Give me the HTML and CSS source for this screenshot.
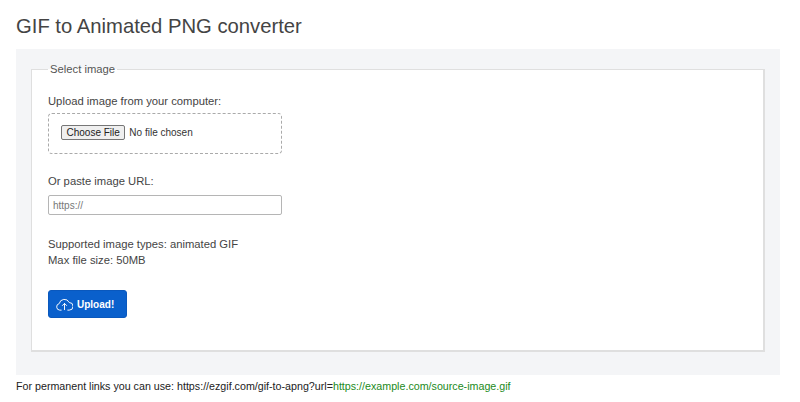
FILE: index.html
```html
<!DOCTYPE html>
<html lang="en">
<head>
    <meta charset="UTF-8">
    <meta name="viewport" content="width=device-width, initial-scale=1.0">
    <title>GIF to Animated PNG converter</title>
    <link rel="stylesheet" href="styles.css">
</head>
<body>
    <h1>GIF to Animated PNG converter</h1>
    <form class="panel">
        <fieldset>
            <legend>Select image</legend>
            <label for="file">Upload image from your computer:</label>
            <div class="drop">
                <input type="file" id="file">
            </div>
            <label for="url" class="url-label">Or paste image URL:</label>
            <input type="text" id="url" class="url" placeholder="https://">
            <p class="info">Supported image types: animated GIF<br>Max file size: 50MB</p>
            <button type="button" class="upload">
                <svg width="17" height="14" viewBox="0 0 18 14" fill="none" stroke="#fff" stroke-width="1" stroke-linecap="round" stroke-linejoin="round">
                    <path d="M5.5 13.5H4a3.5 3.5 0 0 1-.6-6.9A5.6 5.6 0 0 1 14 5.4a4 4 0 0 1 0 8.1h-1.5"/>
                    <path d="M9 13V6.5M6.8 8.6 9 6.4l2.2 2.2"/>
                </svg>
                Upload!
            </button>
        </fieldset>
    </form>
    <p class="note">For permanent links you can use: https://ezgif.com/gif-to-apng?url=<span class="green">https://example.com/source-image.gif</span></p>
</body>
</html>
```

FILE: styles.css
```css
body {
    margin: 0;
    padding: 0 20px 0 16px;
    font-family: "Liberation Sans", Arial, sans-serif;
    font-size: 11.25px;
    color: #333;
    background: #fff;
}
h1 {
    margin: 0;
    padding-top: 13px;
    height: 36px;
    font-size: 20.25px;
    line-height: 26px;
    font-weight: normal;
    color: #444;
}
.panel {
    box-sizing: border-box;
    background: #f4f5f7;
    padding: 14px 15px 23px;
    height: 326px;
}
fieldset {
    box-sizing: border-box;
    margin: 0;
    padding: 18px 16px 0;
    height: 289px;
    background: #fff;
    border: 1px solid #dfdfdf;
    border-bottom-width: 2px;
    border-right-width: 2px;
}
legend {
    margin-left: 0;
    padding: 0 2px;
    line-height: 13px;
    color: #555;
}
label {
    display: block;
    line-height: 14px;
    color: #444;
}
.drop {
    box-sizing: border-box;
    width: 234px;
    height: 41px;
    margin-top: 5px;
    padding: 11px 12px;
    border: 1px dashed #aaa;
    border-radius: 4px;
}
input[type="file"] {
    font-family: inherit;
    font-size: 10px;
    color: #333;
}
input[type="file"]::file-selector-button {
    padding: 1px 4.5px;
    margin-right: 4px;
    border: 1px solid #767676;
    border-radius: 2px;
    background: #efefef;
    font-family: inherit;
    font-size: 10px;
    color: #222;
}
.url-label {
    margin-top: 20px;
}
.url {
    display: block;
    box-sizing: border-box;
    width: 234px;
    height: 20px;
    margin-top: 7px;
    padding: 0 4px;
    border: 1px solid #b5b5b5;
    border-radius: 2px;
    font-family: inherit;
    font-size: 10px;
}
.url::placeholder {
    color: #777;
}
.info {
    margin: 21px 0 0;
    line-height: 16px;
    color: #444;
}
.upload {
    display: flex;
    align-items: center;
    gap: 4px;
    width: 79px;
    height: 28px;
    margin-top: 22px;
    padding: 0 0 0 7px;
    background: #0a60cc;
    color: #fff;
    border: 1px solid #0a58bd;
    border-radius: 3px;
    font-family: inherit;
    font-size: 10px;
    font-weight: bold;
}
.note {
    margin: 5px 0 0;
    font-size: 10.69px;
    line-height: 13px;
    color: #222;
}
.green {
    color: #1b8a1b;
}
```
